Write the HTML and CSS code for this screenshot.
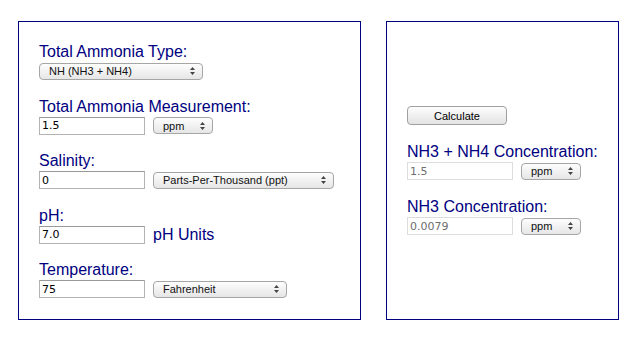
FILE: index.html
```html
<!DOCTYPE html>
<html>
	<head>
		<meta charset="utf-8">
		<title>Ammonia Calculator</title>
		<link rel="stylesheet" href="styles.css">
	</head>
	<body>
		<div id="wrap">
			<div class="box inputs">
				<div class="field">
					<label class="lbl">Total Ammonia Type:</label>
					<div class="row">
						<select class="sel w-type">
							<option>NH (NH3 + NH4)</option>
						</select>
					</div>
				</div>
				<div class="field">
					<label class="lbl">Total Ammonia Measurement:</label>
					<div class="row">
						<input class="txt" type="text" value="1.5">
						<select class="sel w-unit">
							<option>ppm</option>
						</select>
					</div>
				</div>
				<div class="field">
					<label class="lbl">Salinity:</label>
					<div class="row">
						<input class="txt" type="text" value="0">
						<select class="sel w-sal">
							<option>Parts-Per-Thousand (ppt)</option>
						</select>
					</div>
				</div>
				<div class="field">
					<label class="lbl">pH:</label>
					<div class="row">
						<input class="txt" type="text" value="7.0">
						<span class="unit">pH Units</span>
					</div>
				</div>
				<div class="field">
					<label class="lbl">Temperature:</label>
					<div class="row">
						<input class="txt" type="text" value="75">
						<select class="sel w-temp">
							<option>Fahrenheit</option>
						</select>
					</div>
				</div>
			</div>
			<div class="box results">
				<button class="btn" type="button">Calculate</button>
				<div class="field">
					<label class="lbl">NH3 + NH4 Concentration:</label>
					<div class="row">
						<input class="txt out" type="text" value="1.5" readonly>
						<select class="sel w-unit">
							<option>ppm</option>
						</select>
					</div>
				</div>
				<div class="field">
					<label class="lbl">NH3 Concentration:</label>
					<div class="row">
						<input class="txt out" type="text" value="0.0079" readonly>
						<select class="sel w-unit">
							<option>ppm</option>
						</select>
					</div>
				</div>
			</div>
		</div>
	</body>
</html>
```

FILE: styles.css
```css
*{
	padding: 0px;
	margin: 0px;
	box-sizing: border-box;
}
body{
	background-color: #fff;
	font-family: "Liberation Sans", Arial, sans-serif;
}
#wrap{
	display: flex;
	gap: 25px;
	padding: 21px 18px;
}
.box{
	flex: none;
	border: 1px solid #000080;
	height: 299px;
	display: flex;
	flex-direction: column;
	padding-left: 20px;
}
.inputs{
	width: 343px;
	padding-top: 20px;
	gap: 16.5px;
}
.results{
	width: 233px;
	justify-content: center;
	gap: 17px;
}
.lbl{
	display: block;
	color: #000080;
	font-size: 16px;
	line-height: 20px;
}
.row{
	display: flex;
	align-items: center;
	gap: 8px;
	height: 18px;
}
.txt{
	width: 106px;
	height: 18px;
	border: 1px solid #b3b3b3;
	border-top-color: #999;
	font-family: "DejaVu Sans", sans-serif;
	font-size: 11px;
	padding: 0px 2px;
	color: #000;
	outline: none;
}
.txt.out{
	border-color: #ddd;
	color: #6e6e6e;
}
.sel{
	appearance: none;
	-webkit-appearance: none;
	height: 17px;
	border: 1px solid #a6a6a6;
	border-radius: 4px;
	font-family: "Liberation Sans", Arial, sans-serif;
	font-size: 11px;
	color: #111;
	padding: 0px 16px 0px 9px;
	background: url("data:image/svg+xml;utf8,<svg xmlns='http://www.w3.org/2000/svg' width='5' height='8'><path d='M2.5 0L5 3H0z M2.5 8L5 5H0z' fill='%23444'/></svg>") no-repeat right 7px center, linear-gradient(#fdfdfd, #e6e6e6);
}
.w-type{
	width: 164px;
}
.w-unit{
	width: 60px;
}
.w-sal{
	width: 181px;
}
.w-temp{
	width: 134px;
}
.unit{
	color: #000080;
	font-size: 16px;
}
.btn{
	width: 100px;
	height: 19px;
	border: 1px solid #a0a0a0;
	border-radius: 4px;
	background: linear-gradient(#fdfdfd, #e3e3e3);
	font-family: "Liberation Sans", Arial, sans-serif;
	font-size: 11px;
	color: #000;
}
```
